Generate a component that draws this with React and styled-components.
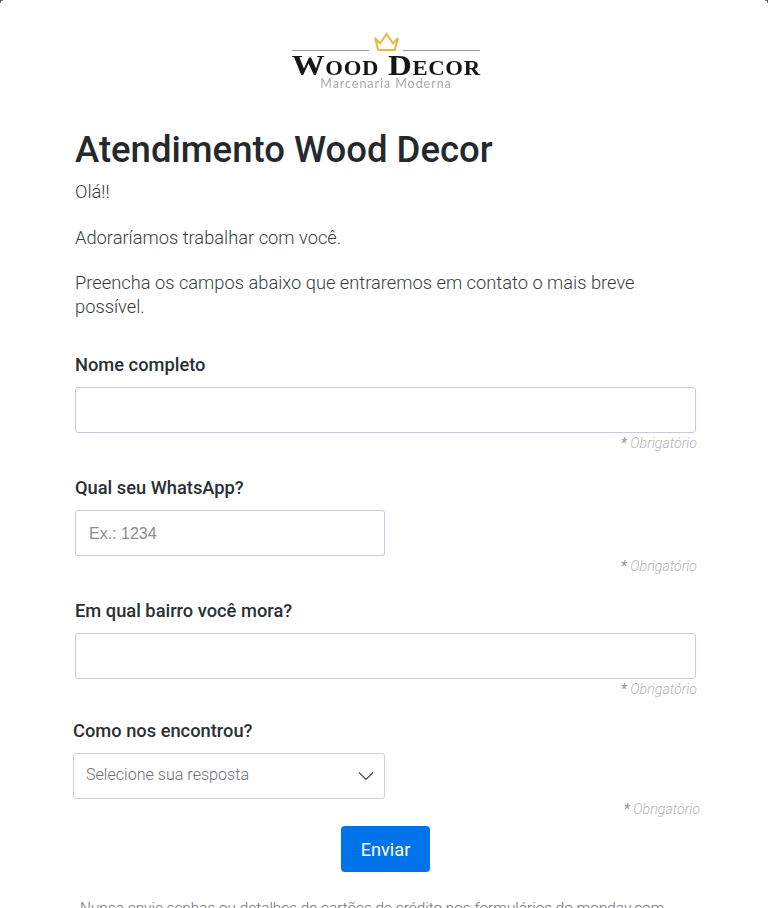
import React from "react";
import styled, { createGlobalStyle } from "styled-components";

const Global = createGlobalStyle`
  html, body { margin: 0; padding: 0; background: #fff; height: 908px; overflow: hidden; }
  body { font-family: Roboto, "Liberation Sans", sans-serif; color: #323338; }
`;
const Page = styled.main`
  width: 768px; height: 908px; overflow: hidden; box-sizing: border-box; position: relative;
  background: #fff; padding-top: 32px;
`;
const Corner = styled.div`
  position: absolute; top: 0; ${p => p.$side}: 0; width: 4px; height: 4px;
  background: radial-gradient(circle at ${p => p.$side === "left" ? "100% 100%" : "0 100%"}, transparent 3.5px, #555 4px);
`;
const Logo = styled.div`
  width: 190px; margin: 0 0 0 291px; height: 60px; display: flex; flex-direction: column; align-items: center;
  filter: blur(0.4px);
`;
const LogoTop = styled.div`
  width: 188px; height: 20px; display: flex; align-items: flex-end; justify-content: space-between;
`;
const LogoRule = styled.span`
  width: 77px; height: 1.5px; background: #9a9a9a; margin-bottom: 1px;
`;
const LogoName = styled.div`
  font-family: "Liberation Serif", serif; font-weight: 700; font-size: 29px; line-height: 18px;
  font-variant: small-caps; color: #161616; letter-spacing: 0.6px; white-space: nowrap; margin-top: 4px;
  transform: scaleX(1.135);
`;
const LogoSub = styled.div`
  font-family: Lato, sans-serif; font-size: 12.5px; line-height: 10px; letter-spacing: 0.95px; color: #a9a9a9; margin-top: 5px; white-space: nowrap;
`;
const Content = styled.div`
  padding: 0 72px 0 75px;
`;
const Title = styled.h1`
  margin: 31px 0 0; font-size: 36.5px; line-height: 54px; font-weight: 500; color: #24292d; white-space: nowrap;
`;
const Para = styled.p`
  margin: 0 0 21.5px; font-size: 18.3px; line-height: 24px; font-weight: 300; color: #3a3b40;
  &:first-of-type { margin-top: 3px; }
`;
const Intro = styled.div`
  margin-bottom: 34px;
  & > p:last-child { margin-bottom: 0; }
`;
const Field = styled.div`
  margin-left: ${p => p.$shift || 0}px;
  height: ${p => p.$height}px;
`;
const Label = styled.label`
  display: block; font-size: 18.3px; font-weight: 500; line-height: 24px; color: #2b2f33; margin-bottom: 10px;
`;
const Input = styled.input`
  display: block; box-sizing: border-box; width: ${p => p.$width}px; height: 46px;
  border: 1px solid #c8c9dc; border-radius: 3px; padding: 0 13px; background: #fff; outline: 0;
  font-family: Roboto, sans-serif; font-size: 16px; color: #323338;
  &::placeholder { color: #8b8c90; opacity: 1; font-weight: 300; font-family: "Liberation Sans", sans-serif; }
`;
const Required = styled.div`
  font-size: 14.1px; line-height: 20px; font-style: italic; font-weight: 300; color: #b4b4b8; text-align: right;
  width: ${p => p.$width}px;
`;
const Star = styled.span`
  font-weight: 500; color: #9a9a9e;
`;
const Select = styled.div`
  box-sizing: border-box; width: 312px; height: 46px; border: 1px solid #d0d0d4; border-radius: 3px;
  display: flex; align-items: center; justify-content: space-between; padding: 0 8px 0 12px;
  font-size: 16.1px; font-weight: 300; color: #6f7077;
`;
const SelectValue = styled.span`
  margin-bottom: 3px;
`;
const Submit = styled.button`
  display: block; margin: 10px 0 0 266px; width: 89px; height: 46px; border: 0; border-radius: 4px;
  background: #0073ea; color: #fff; font-family: Roboto, sans-serif; font-size: 18.2px; font-weight: 400;
`;
const Foot = styled.p`
  margin: 26px 0 0 5px; font-size: 15.37px; line-height: 20px; font-weight: 300; color: #6f7077; white-space: nowrap;
`;

const Req = ({ width }) => (
  <Required $width={width}><Star>*</Star> Obrigatório</Required>
);

export default function App() {
  return (
    <Page>
      <Global />
      <Corner $side="left" />
      <Corner $side="right" />
      <Logo>
        <LogoTop>
          <LogoRule />
          <svg width="27" height="20" viewBox="0 0 27 20" fill="none" stroke="#eab73e" strokeWidth="2" strokeLinejoin="miter">
            <path d="M2 6l5 5.5L13.5 2 20 11.5 25 6l-3.2 12H5.2z" />
          </svg>
          <LogoRule />
        </LogoTop>
        <LogoName>Wood Decor</LogoName>
        <LogoSub>Marcenaria Moderna</LogoSub>
      </Logo>
      <Content>
        <Title>Atendimento Wood Decor</Title>
        <Intro>
          <Para>Olá!!</Para>
          <Para>Adoraríamos trabalhar com você.</Para>
          <Para>Preencha os campos abaixo que entraremos em contato o mais breve possível.</Para>
        </Intro>
        <Field $height={123}>
          <Label>Nome completo</Label>
          <Input $width={621} />
          <Req width={622} />
        </Field>
        <Field $height={123}>
          <Label>Qual seu WhatsApp?</Label>
          <Input $width={310} placeholder="Ex.: 1234" />
          <Req width={622} />
        </Field>
        <Field $height={120}>
          <Label>Em qual bairro você mora?</Label>
          <Input $width={621} />
          <Req width={622} />
        </Field>
        <Field $shift={-2} $height={97}>
          <Label>Como nos encontrou?</Label>
          <Select>
            <SelectValue>Selecione sua resposta</SelectValue>
            <svg width="20" height="20" viewBox="0 0 20 20" fill="none" stroke="#4a4a50" strokeWidth="1.2">
              <path d="M3 6.5l7 7 7-7" />
            </svg>
          </Select>
          <Req width={627} />
        </Field>
        <Submit>Enviar</Submit>
        <Foot>Nunca envie senhas ou detalhes de cartões de crédito nos formulários do monday.com</Foot>
      </Content>
    </Page>
  );
}
